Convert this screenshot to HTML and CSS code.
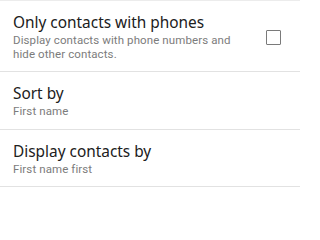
FILE: index.html
```html
<!DOCTYPE html>
<html>
<head>
<meta charset="utf-8">
<link rel="stylesheet" href="styles.css">
</head>
<body>
<div class="list">
  <div class="row">
    <div class="text">
      <div class="title">Only contacts with phones</div>
      <div class="sub">Display contacts with phone numbers and<br>hide other contacts.</div>
    </div>
    <div class="checkbox"></div>
  </div>
  <div class="row">
    <div class="text">
      <div class="title">Sort by</div>
      <div class="sub">First name</div>
    </div>
  </div>
  <div class="row">
    <div class="text">
      <div class="title">Display contacts by</div>
      <div class="sub">First name first</div>
    </div>
  </div>
</div>
</body>
</html>
```
FILE: styles.css
```css
html, body {
  margin: 0;
  padding: 0;
  background: #fff;
  width: 300px;
  height: 200px;
  overflow: hidden;
}
body {
  font-family: "Noto Sans", Roboto, sans-serif;
}
.list {
  border-top: 1px solid #ececec;
}
.row {
  display: flex;
  align-items: center;
  padding: 12px 19px 10px 13px;
  border-bottom: 1px solid #e2e2e2;
}
.text {
  flex: 1;
}
.title {
  font-size: 15.4px;
  line-height: 20px;
  color: #202020;
}
.sub {
  font-family: Roboto, "Noto Sans", sans-serif;
  font-size: 11.5px;
  line-height: 13.5px;
  letter-spacing: 0.1px;
  color: #7c7c7c;
  margin-top: 1px;
}
.checkbox {
  width: 13px;
  height: 13px;
  border: 1.5px solid #7a7a7a;
  border-radius: 1px;
}
```
